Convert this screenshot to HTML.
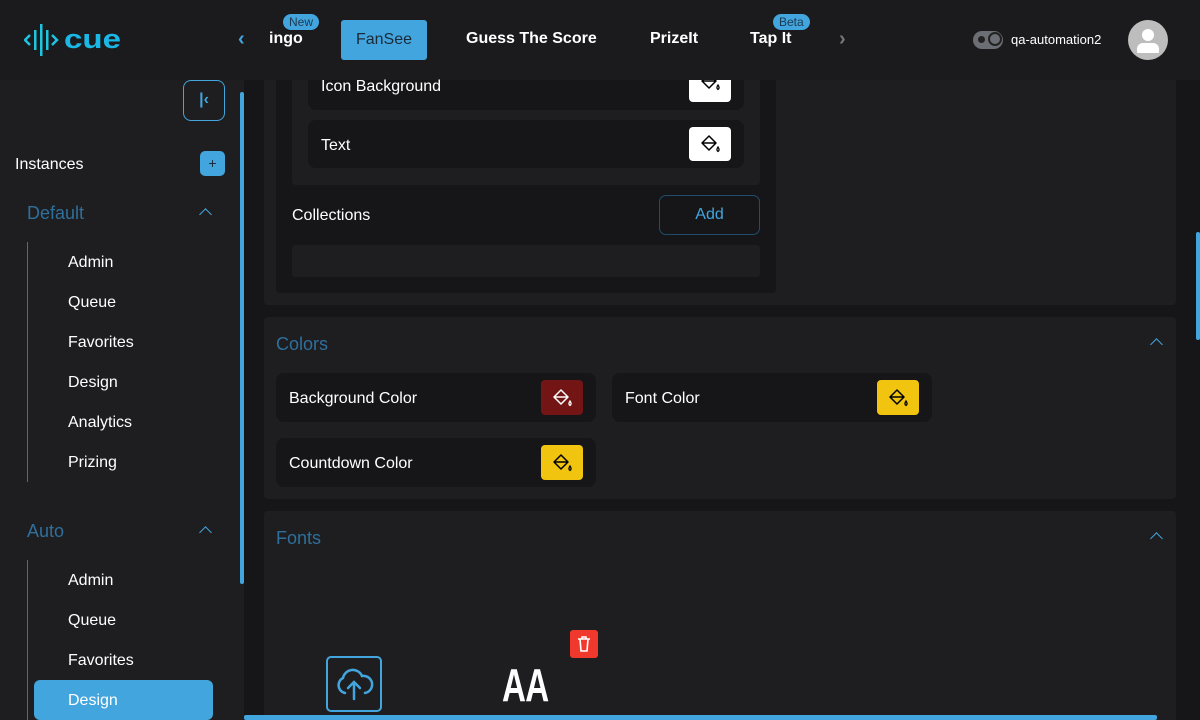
<!DOCTYPE html>
<html><head><meta charset="utf-8"><style>
*{box-sizing:border-box;margin:0;padding:0}
html,body{width:1200px;height:720px;overflow:hidden}
body{background:#161618;font-family:"Liberation Sans",sans-serif;color:#fff;position:relative}
.a{position:absolute}
.hdr{left:0;top:0;width:1200px;height:80px;background:#1b1b1d}
.nav{font-weight:bold;font-size:16px;top:30px}
.badge{background:#42a5de;color:#1b3a52;font-size:12px;border-radius:9px;padding:1px 6px;top:14px}
.side{left:0;top:80px;width:244px;height:640px;background:#1e1e20}
.si{font-size:16px;color:#fff}
.panel{background:#1e1e20;border-radius:4px}
.row{background:#161618;border-radius:8px}
.sw{width:42px;height:34px;border-radius:4px;display:flex;align-items:center;justify-content:center}
.lbl{font-size:16px}
.blue{color:#2f6f9c;font-size:18px}
</style></head><body>
<div class="a hdr"></div>
<svg class="a" style="left:24px;top:22px" width="102" height="36" viewBox="0 0 102 36">
<path d="M6 13 L1 18 L6 23" stroke="#1ec4e0" stroke-width="2.5" fill="none"/>
<rect x="10" y="8" width="2.5" height="20" fill="#1ec4e0"/><rect x="16" y="2" width="2.5" height="32" fill="#1ec4e0"/><rect x="22" y="8" width="2.5" height="20" fill="#1ec4e0"/>
<path d="M28 13 L33 18 L28 23" stroke="#1ec4e0" stroke-width="2.5" fill="none"/>
<text x="40" y="26" font-family="Liberation Sans" font-weight="bold" font-size="27" fill="#1ab8e6" textLength="57" lengthAdjust="spacingAndGlyphs">cue</text></svg>
<div class="a" style="left:238px;top:28px;color:#42a5de;font-size:20px;font-weight:bold">‹</div>
<div class="a nav" style="left:269px">ingo</div>
<div class="a badge" style="left:283px">New</div>
<div class="a" style="left:341px;top:20px;width:86px;height:40px;background:#42a5de;border-radius:3px;color:#1b2a38;font-size:16px;text-align:center;line-height:40px">FanSee</div>
<div class="a nav" style="left:466px">Guess The Score</div>
<div class="a nav" style="left:650px">PrizeIt</div>
<div class="a nav" style="left:750px">Tap It</div>
<div class="a badge" style="left:773px">Beta</div>
<div class="a" style="left:839px;top:28px;color:#777;font-size:20px;font-weight:bold">›</div>
<div class="a" style="left:973px;top:31px;width:30px;height:18px;border-radius:9px;background:#6b6e74"></div>
<div class="a" style="left:978px;top:36px;width:7px;height:7px;border-radius:50%;background:#222"></div>
<div class="a" style="left:988px;top:32px;width:14px;height:14px;border-radius:50%;border:2px solid #222"></div>
<div class="a" style="left:1011px;top:32px;font-size:13px">qa-automation2</div>
<div class="a" style="left:1128px;top:20px;width:40px;height:40px;border-radius:50%;background:#bdbdbd;overflow:hidden">
<div class="a" style="left:14px;top:9px;width:12px;height:12px;border-radius:50%;background:#fff"></div>
<div class="a" style="left:9px;top:23px;width:22px;height:10px;border-radius:6px 6px 1px 1px;background:#fff"></div></div>

<div class="a side"></div>
<div class="a" style="left:240px;top:92px;width:4px;height:492px;background:#42a5de;border-radius:2px"></div>
<div class="a" style="left:183px;top:80px;width:42px;height:41px;border:1px solid #42a5de;border-radius:8px;color:#42a5de;font-size:16px;text-align:center;line-height:38px;font-weight:bold">|‹</div>
<div class="a si" style="left:15px;top:156px">Instances</div>
<div class="a" style="left:200px;top:151px;width:25px;height:25px;background:#42a5de;border-radius:5px;color:#1b2a38;text-align:center;line-height:25px;font-size:14px">+</div>
<div class="a blue" style="left:27px;top:203px">Default</div>
<div class="a" style="left:201px;top:210px;width:9px;height:9px;border-left:1.5px solid #42a5de;border-top:1.5px solid #42a5de;transform:rotate(45deg)"></div>
<div class="a" style="left:27px;top:242px;width:1px;height:240px;background:#666"></div>
<div class="a si" style="left:68px;top:254px">Admin</div>
<div class="a si" style="left:68px;top:294px">Queue</div>
<div class="a si" style="left:68px;top:334px">Favorites</div>
<div class="a si" style="left:68px;top:374px">Design</div>
<div class="a si" style="left:68px;top:414px">Analytics</div>
<div class="a si" style="left:68px;top:454px">Prizing</div>
<div class="a blue" style="left:27px;top:521px">Auto</div>
<div class="a" style="left:201px;top:528px;width:9px;height:9px;border-left:1.5px solid #42a5de;border-top:1.5px solid #42a5de;transform:rotate(45deg)"></div>
<div class="a" style="left:27px;top:560px;width:1px;height:160px;background:#666"></div>
<div class="a si" style="left:68px;top:572px">Admin</div>
<div class="a si" style="left:68px;top:612px">Queue</div>
<div class="a si" style="left:68px;top:652px">Favorites</div>
<div class="a" style="left:34px;top:680px;width:179px;height:40px;background:#42a5de;border-radius:6px"></div>
<div class="a si" style="left:68px;top:692px">Design</div>

<!-- top panel -->
<div class="a panel" style="left:264px;top:80px;width:912px;height:225px;border-radius:0 0 4px 4px"></div>
<div class="a" style="left:276px;top:80px;width:500px;height:213px;background:#161618;border-radius:0 0 4px 4px"></div>
<div class="a" style="left:292px;top:80px;width:468px;height:105px;background:#1e1e20;border-radius:0 0 4px 4px"></div>
<div class="a row" style="left:308px;top:80px;width:436px;height:30px;border-radius:0 0 8px 8px"></div>
<div class="a lbl" style="left:321px;top:78px">Icon Background</div>
<div class="a" style="left:689px;top:80px;width:42px;height:22px;background:#fff;border-radius:0 0 4px 4px;display:flex;justify-content:center;overflow:hidden"><svg width="22" height="22" viewBox="0 0 22 22" style="margin-top:-9px"><path d="M3 10 L10 3 L17 10 L10 17 Z M3 10 H17" stroke="#000" stroke-width="1.5" fill="none" stroke-linejoin="round"/><path d="M19 14 q-2.2 3 0 4.5 q2.2-1.5 0-4.5z" stroke="#000" stroke-width="1.3" fill="none"/></svg></div>
<div class="a row" style="left:308px;top:120px;width:436px;height:48px"></div>
<div class="a lbl" style="left:321px;top:137px">Text</div>
<div class="a sw" style="left:689px;top:127px;background:#fff"><svg width="22" height="22" viewBox="0 0 22 22"><path d="M3 10 L10 3 L17 10 L10 17 Z M3 10 H17" stroke="#000" stroke-width="1.5" fill="none" stroke-linejoin="round"/><path d="M19 14 q-2.2 3 0 4.5 q2.2-1.5 0-4.5z" stroke="#000" stroke-width="1.3" fill="none"/></svg></div>
<div class="a lbl" style="left:292px;top:207px">Collections</div>
<div class="a" style="left:659px;top:195px;width:101px;height:40px;border:1px solid #1f4d6d;border-radius:7px;color:#42a5de;font-size:16px;text-align:center;line-height:38px">Add</div>
<div class="a" style="left:292px;top:245px;width:468px;height:32px;background:#1e1e20;border-radius:3px"></div>

<!-- colors -->
<div class="a panel" style="left:264px;top:317px;width:912px;height:182px"></div>
<div class="a blue" style="left:276px;top:334px">Colors</div>
<div class="a" style="left:1152px;top:340px;width:9px;height:9px;border-left:1.5px solid #42a5de;border-top:1.5px solid #42a5de;transform:rotate(45deg)"></div>
<div class="a row" style="left:276px;top:373px;width:320px;height:49px"></div>
<div class="a lbl" style="left:289px;top:390px">Background Color</div>
<div class="a sw" style="left:541px;top:380px;width:42px;height:35px;background:#731515"><svg width="22" height="22" viewBox="0 0 22 22"><path d="M3 10 L10 3 L17 10 L10 17 Z M3 10 H17" stroke="#fff" stroke-width="1.5" fill="none" stroke-linejoin="round"/><path d="M19 14 q-2.2 3 0 4.5 q2.2-1.5 0-4.5z" stroke="#fff" stroke-width="1.3" fill="none"/></svg></div>
<div class="a row" style="left:612px;top:373px;width:320px;height:49px"></div>
<div class="a lbl" style="left:625px;top:390px">Font Color</div>
<div class="a sw" style="left:877px;top:380px;width:42px;height:35px;background:#f1c40f"><svg width="22" height="22" viewBox="0 0 22 22"><path d="M3 10 L10 3 L17 10 L10 17 Z M3 10 H17" stroke="#000" stroke-width="1.5" fill="none" stroke-linejoin="round"/><path d="M19 14 q-2.2 3 0 4.5 q2.2-1.5 0-4.5z" stroke="#000" stroke-width="1.3" fill="none"/></svg></div>
<div class="a row" style="left:276px;top:438px;width:320px;height:49px"></div>
<div class="a lbl" style="left:289px;top:455px">Countdown Color</div>
<div class="a sw" style="left:541px;top:445px;width:42px;height:35px;background:#f1c40f"><svg width="22" height="22" viewBox="0 0 22 22"><path d="M3 10 L10 3 L17 10 L10 17 Z M3 10 H17" stroke="#000" stroke-width="1.5" fill="none" stroke-linejoin="round"/><path d="M19 14 q-2.2 3 0 4.5 q2.2-1.5 0-4.5z" stroke="#000" stroke-width="1.3" fill="none"/></svg></div>

<!-- fonts -->
<div class="a panel" style="left:264px;top:511px;width:912px;height:209px;border-radius:4px 4px 0 0"></div>
<div class="a blue" style="left:276px;top:528px">Fonts</div>
<div class="a" style="left:1152px;top:534px;width:9px;height:9px;border-left:1.5px solid #42a5de;border-top:1.5px solid #42a5de;transform:rotate(45deg)"></div>
<div class="a" style="left:326px;top:656px;width:56px;height:56px;border:2px solid #42a5de;border-radius:5px"></div>
<svg class="a" style="left:333px;top:663px" width="42" height="42" viewBox="0 0 42 42"><path d="M12 30 A8 8 0 0 1 10 15 A10 10 0 0 1 29 13 A8 8 0 0 1 32 30" stroke="#42a5de" stroke-width="2.5" fill="none" stroke-linecap="round"/><path d="M21 36 V20 M15 25 L21 19 L27 25" stroke="#42a5de" stroke-width="2.5" fill="none" stroke-linecap="round"/></svg>
<div class="a" style="left:502px;top:662px;font-size:46px;line-height:46px;font-weight:bold;font-family:'Liberation Sans',sans-serif;transform:scaleX(0.72);transform-origin:left;letter-spacing:-1px">AA</div>
<div class="a" style="left:570px;top:630px;width:28px;height:28px;background:#f0382d;border-radius:3px"></div>
<svg class="a" style="left:576px;top:635px" width="16" height="18" viewBox="0 0 16 18"><path d="M2 4 H14 M6 4 V2 H10 V4 M4 4 L5 16 H11 L12 4" stroke="#fff" stroke-width="1.6" fill="none"/></svg>
<div class="a" style="left:244px;top:715px;width:913px;height:5px;background:#42a5de;border-radius:2px"></div>
<div class="a" style="left:1196px;top:232px;width:4px;height:108px;background:#42a5de;border-radius:2px"></div>
</body></html>
